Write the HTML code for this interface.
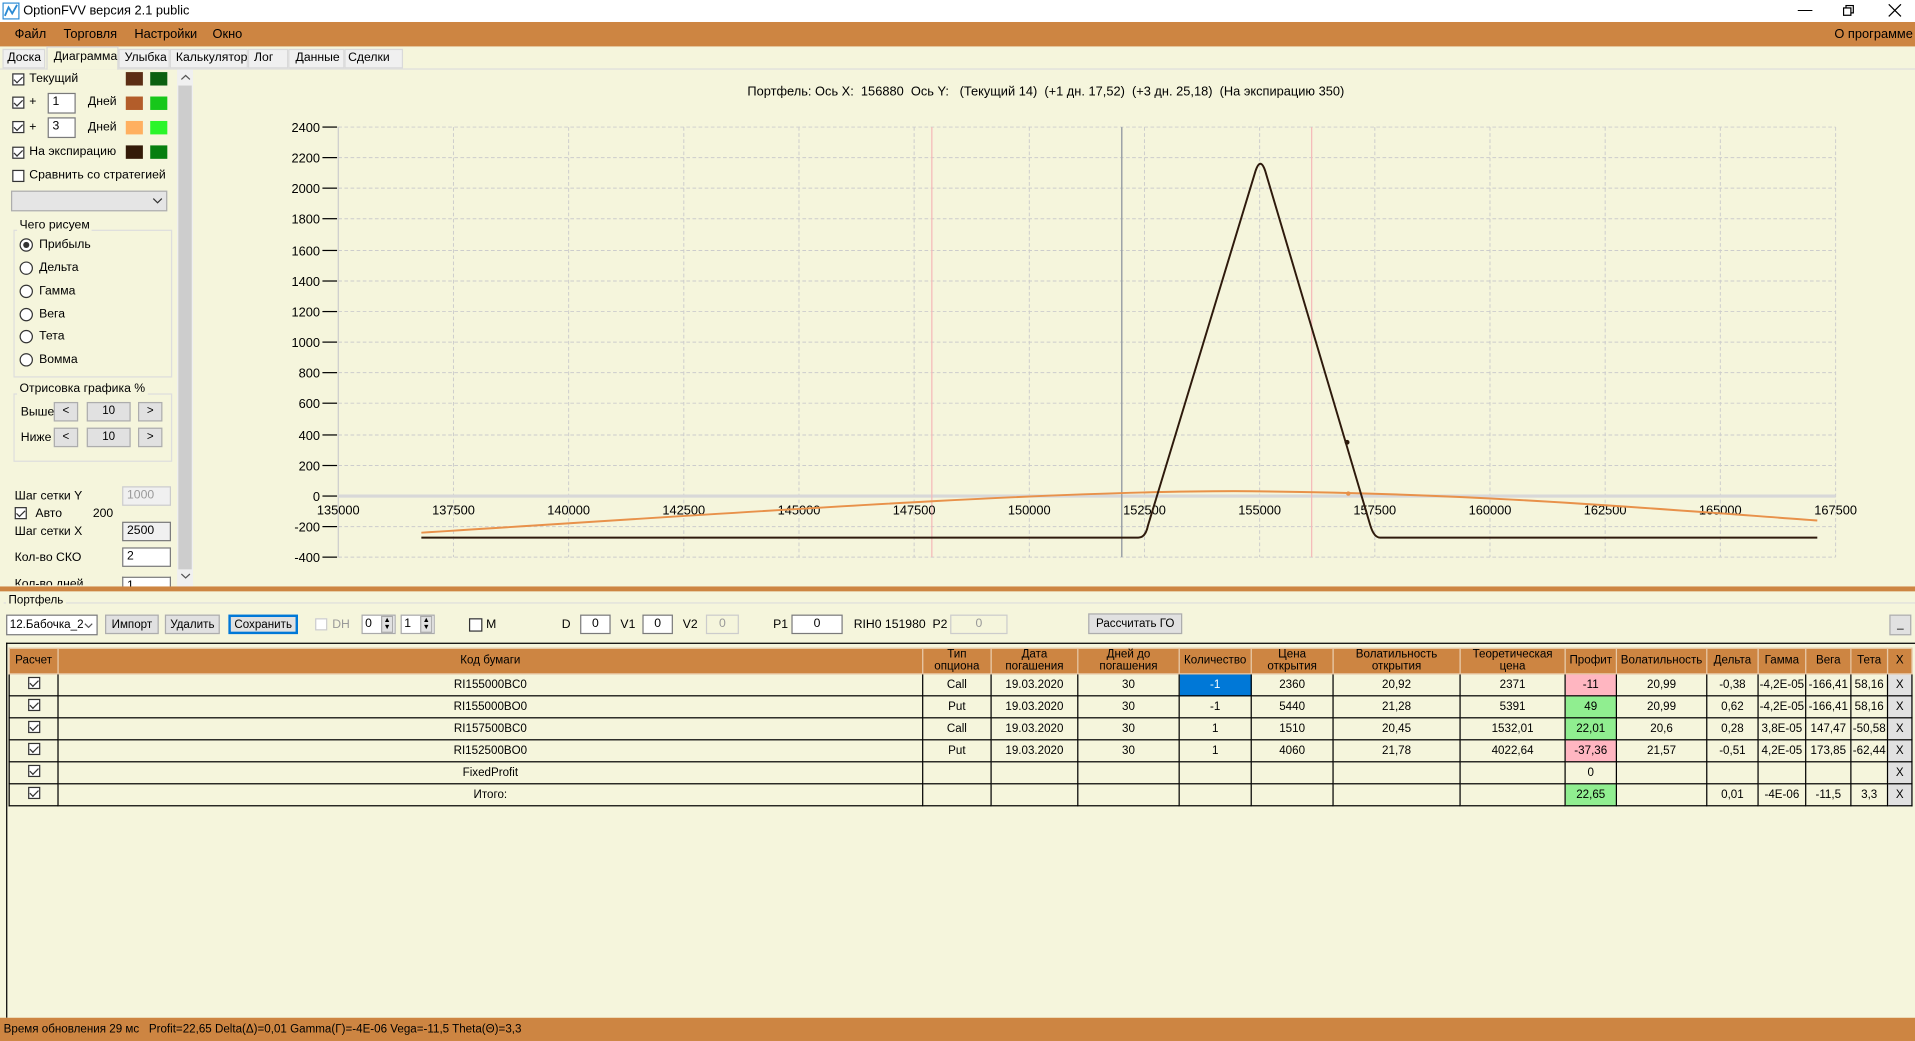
<!DOCTYPE html>
<html><head><meta charset="utf-8">
<style>
*{box-sizing:border-box;margin:0;padding:0}
html,body{width:1915px;height:1041px;overflow:hidden;background:#F5F5DC}
body{font-family:"Liberation Sans",sans-serif;color:#000}
#w{position:absolute;left:0;top:0;width:1568px;height:852px;transform:scale(1.22130,1.2218);transform-origin:0 0;background:#F5F5DC;font-size:10px}
.a{position:absolute;white-space:nowrap}
.cb{position:absolute;width:10px;height:10px;border:1px solid #333;background:#fff}
.cb.k::after{content:"";position:absolute;left:2px;top:0px;width:3px;height:6px;border:solid #333;border-width:0 1px 1px 0;transform:rotate(45deg)}
.rb{position:absolute;width:11px;height:11px;border:1px solid #333;border-radius:50%;background:#fff}
.sw{position:absolute;width:14px;height:11px}
.inp{position:absolute;background:#fff;border:1px solid #7a7a7a;height:16px;font-size:10px;padding:1px 3px}
.btn{position:absolute;background:#e1e1e1;border:1px solid #adadad;height:16px;font-size:9.5px;text-align:center;line-height:14px}
table{border-collapse:collapse;position:absolute;left:7px;top:530px;font-size:9.5px}
td,th{border:1px solid #000;text-align:center;padding:0;height:18px;font-weight:normal}
th{background:#CD8542;line-height:10px;height:21px;border-color:#e8c9a8}
.pk{background:#FFB6C1}.gr{background:#90EE90}.bl{background:#0078D7;color:#fff}
.x{background:#e1e1e1}
</style></head><body><div id="w">
<!-- title bar -->
<div class="a" style="left:0;top:0;width:1568px;height:18px;background:#fff"></div>
<svg class="a" style="left:2px;top:2px" width="14" height="14"><rect x="0.5" y="0.5" width="13" height="13" fill="none" stroke="#2a8ad4"/><path d="M2,11 L5,4 L8,9 L12,2" stroke="#2a8ad4" fill="none" stroke-width="1.5"/></svg>
<div class="a" style="left:19px;top:3px;font-size:10.5px">OptionFVV версия 2.1 public</div>
<div class="a" style="left:1472px;top:1px;font-size:12px">&#8212;</div>
<svg class="a" style="left:1509px;top:4px" width="10" height="10"><rect x="0.5" y="2.5" width="6" height="6" fill="none" stroke="#000"/><path d="M2.5,2.5V0.5H8.5V6.5H6.5" fill="none" stroke="#000"/></svg>
<svg class="a" style="left:1546px;top:3px" width="11" height="11"><path d="M0.5,0.5L10.5,10.5M10.5,0.5L0.5,10.5" stroke="#000"/></svg>
<!-- menu -->
<div class="a" style="left:0;top:18px;width:1568px;height:20px;background:#CD8542"></div>
<div class="a" style="left:12px;top:22px;font-size:10.5px">Файл</div>
<div class="a" style="left:52px;top:22px;font-size:10.5px">Торговля</div>
<div class="a" style="left:110px;top:22px;font-size:10.5px">Настройки</div>
<div class="a" style="left:174px;top:22px;font-size:10.5px">Окно</div>
<div class="a" style="left:1502px;top:22px;font-size:10.5px">О программе</div>
<!-- tabs -->
<div class="a" style="left:0;top:67px;width:1568px;height:1px;background:#ddd;top:56px"></div>
<div class="a" style="left:2px;top:40px;width:35px;height:16px;background:#f0f0f0;border:1px solid #d9d9d9"></div>
<div class="a" style="left:6px;top:42px">Доска</div>
<div class="a" style="left:38px;top:38px;width:59px;height:19px;background:#F5F5DC;border:1px solid #d9d9d9;border-bottom:none"></div>
<div class="a" style="left:44px;top:41px">Диаграмма</div>
<div class="a" style="left:97px;top:40px;width:300px;height:16px"></div>
<div class="a" style="left:97px;top:40px;width:42px;height:16px;background:#f0f0f0;border:1px solid #d9d9d9"></div><div class="a" style="left:102px;top:42px">Улыбка</div>
<div class="a" style="left:139px;top:40px;width:64px;height:16px;background:#f0f0f0;border:1px solid #d9d9d9"></div><div class="a" style="left:144px;top:42px">Калькулятор</div>
<div class="a" style="left:203px;top:40px;width:33px;height:16px;background:#f0f0f0;border:1px solid #d9d9d9"></div><div class="a" style="left:208px;top:42px">Лог</div>
<div class="a" style="left:236px;top:40px;width:46px;height:16px;background:#f0f0f0;border:1px solid #d9d9d9"></div><div class="a" style="left:242px;top:42px">Данные</div>
<div class="a" style="left:282px;top:40px;width:48px;height:16px;background:#f0f0f0;border:1px solid #d9d9d9"></div><div class="a" style="left:285px;top:42px">Сделки</div>
<!-- left panel -->
<div class="cb k" style="left:10px;top:60px"></div><div class="a" style="left:24px;top:59px">Текущий</div>
<div class="sw" style="left:103px;top:59px;background:#5C2E14"></div><div class="sw" style="left:123px;top:59px;background:#0B6010"></div>
<div class="cb k" style="left:10px;top:79px"></div><div class="a" style="left:24px;top:78px">+</div>
<div class="inp" style="left:39px;top:76px;width:23px;height:17px">1</div><div class="a" style="left:72px;top:78px">Дней</div>
<div class="sw" style="left:103px;top:79px;background:#B35D2A"></div><div class="sw" style="left:123px;top:79px;background:#17C71A"></div>
<div class="cb k" style="left:10px;top:99px"></div><div class="a" style="left:24px;top:99px">+</div>
<div class="inp" style="left:39px;top:96px;width:23px;height:17px">3</div><div class="a" style="left:72px;top:99px">Дней</div>
<div class="sw" style="left:103px;top:99px;background:#FFB060"></div><div class="sw" style="left:123px;top:99px;background:#2AF52A"></div>
<div class="cb k" style="left:10px;top:120px"></div><div class="a" style="left:24px;top:119px">На экспирацию</div>
<div class="sw" style="left:103px;top:119px;background:#331A08"></div><div class="sw" style="left:123px;top:119px;background:#067F0F"></div>
<div class="cb" style="left:10px;top:139px"></div><div class="a" style="left:24px;top:138px">Сравнить со стратегией</div>
<div class="a" style="left:9px;top:156px;width:128px;height:17px;background:#e5e5e5;border:1px solid #adadad"></div>
<svg class="a" style="left:125px;top:162px" width="8" height="5"><path d="M0.5,0.5L4,4L7.5,0.5" stroke="#333" fill="none"/></svg>
<div class="a" style="left:11px;top:188px;width:130px;height:121px;border:1px solid #ddd"></div>
<div class="a" style="left:14px;top:179px;background:#F5F5DC;padding:0 2px">Чего рисуем</div>
<div class="rb" style="left:16px;top:195px"><div style="position:absolute;left:2px;top:2px;width:5px;height:5px;border-radius:50%;background:#333"></div></div><div class="a" style="left:32px;top:195px">Прибыль</div>
<div class="rb" style="left:16px;top:214px"></div><div class="a" style="left:32px;top:214px">Дельта</div>
<div class="rb" style="left:16px;top:233px"></div><div class="a" style="left:32px;top:233px">Гамма</div>
<div class="rb" style="left:16px;top:252px"></div><div class="a" style="left:32px;top:252px">Вега</div>
<div class="rb" style="left:16px;top:270px"></div><div class="a" style="left:32px;top:270px">Тета</div>
<div class="rb" style="left:16px;top:289px"></div><div class="a" style="left:32px;top:289px">Вомма</div>
<div class="a" style="left:11px;top:322px;width:130px;height:56px;border:1px solid #ddd"></div>
<div class="a" style="left:14px;top:313px;background:#F5F5DC;padding:0 2px">Отрисовка графика %</div>
<div class="a" style="left:17px;top:332px">Выше</div>
<div class="btn" style="left:44px;top:329px;width:20px">&lt;</div><div class="btn" style="left:71px;top:329px;width:36px">10</div><div class="btn" style="left:113px;top:329px;width:20px">&gt;</div>
<div class="a" style="left:17px;top:353px">Ниже</div>
<div class="btn" style="left:44px;top:350px;width:20px">&lt;</div><div class="btn" style="left:71px;top:350px;width:36px">10</div><div class="btn" style="left:113px;top:350px;width:20px">&gt;</div>
<div class="a" style="left:12px;top:401px">Шаг сетки Y</div>
<div class="inp" style="left:100px;top:398px;width:40px;color:#999;background:#f0f0f0;border-color:#ccc">1000</div>
<div class="cb k" style="left:12px;top:415px"></div><div class="a" style="left:29px;top:415px">Авто</div><div class="a" style="left:76px;top:415px">200</div>
<div class="a" style="left:12px;top:430px">Шаг сетки X</div>
<div class="inp" style="left:100px;top:427px;width:40px;background:#f0f0f0">2500</div>
<div class="a" style="left:12px;top:451px">Кол-во СКО</div>
<div class="inp" style="left:100px;top:448px;width:40px">2</div>
<div class="a" style="left:12px;top:473px;height:6px;overflow:hidden">Кол-во дней</div>
<div class="inp" style="left:100px;top:472px;width:40px;height:8px;overflow:hidden;border-bottom:none">1</div>
<!-- scrollbar -->
<div class="a" style="left:145px;top:57px;width:13px;height:423px;background:#f0f0f0"></div>
<div class="a" style="left:146px;top:70px;width:11px;height:396px;background:#cdcdcd"></div>
<svg class="a" style="left:148px;top:61px" width="8" height="5"><path d="M0.5,4L4,0.8L7.5,4" stroke="#555" fill="none"/></svg>
<svg class="a" style="left:148px;top:469px" width="8" height="5"><path d="M0.5,0.8L4,4L7.5,0.8" stroke="#555" fill="none"/></svg>
<!-- chart -->
<div class="a" style="left:612px;top:69px;font-size:10.5px">Портфель: Ось X:&nbsp; 156880&nbsp; Ось Y:&nbsp;&nbsp; (Текущий 14)&nbsp; (+1 дн. 17,52)&nbsp; (+3 дн. 25,18)&nbsp; (На экспирацию 350)</div>
<svg class="a" style="left:0;top:0" width="1568" height="480" font-family="Liberation Sans,sans-serif" font-size="11">
<g stroke="#ccc" stroke-dasharray="3,2" stroke-width="0.8">
<line x1="277" y1="104" x2="1503" y2="104"/><line x1="277" y1="129" x2="1503" y2="129"/><line x1="277" y1="154" x2="1503" y2="154"/><line x1="277" y1="179" x2="1503" y2="179"/><line x1="277" y1="205" x2="1503" y2="205"/><line x1="277" y1="230" x2="1503" y2="230"/><line x1="277" y1="255" x2="1503" y2="255"/><line x1="277" y1="280" x2="1503" y2="280"/><line x1="277" y1="305" x2="1503" y2="305"/><line x1="277" y1="330" x2="1503" y2="330"/><line x1="277" y1="356" x2="1503" y2="356"/><line x1="277" y1="381" x2="1503" y2="381"/><line x1="277" y1="431" x2="1503" y2="431"/><line x1="277" y1="456" x2="1503" y2="456"/>
<line x1="371.3" y1="104" x2="371.3" y2="456"/><line x1="465.6" y1="104" x2="465.6" y2="456"/><line x1="559.9" y1="104" x2="559.9" y2="456"/><line x1="654.2" y1="104" x2="654.2" y2="456"/><line x1="748.5" y1="104" x2="748.5" y2="456"/><line x1="842.8" y1="104" x2="842.8" y2="456"/><line x1="937.1" y1="104" x2="937.1" y2="456"/><line x1="1031.4" y1="104" x2="1031.4" y2="456"/><line x1="1125.7" y1="104" x2="1125.7" y2="456"/><line x1="1220" y1="104" x2="1220" y2="456"/><line x1="1314.3" y1="104" x2="1314.3" y2="456"/><line x1="1408.6" y1="104" x2="1408.6" y2="456"/><line x1="1503" y1="104" x2="1503" y2="456"/>
</g>
<line x1="277" y1="104" x2="277" y2="456" stroke="#ccc"/>
<line x1="277" y1="406" x2="1503" y2="406" stroke="#d8d8d8" stroke-width="2.5"/>
<line x1="763" y1="104" x2="763" y2="456" stroke="#f5b8b8"/>
<line x1="1074" y1="104" x2="1074" y2="456" stroke="#f5b8b8"/>
<line x1="918.5" y1="104" x2="918.5" y2="456" stroke="#9aa0a6" stroke-width="1.2"/>
<g stroke="#000" stroke-width="1">
<line x1="264" y1="104" x2="276" y2="104"/><line x1="264" y1="129" x2="276" y2="129"/><line x1="264" y1="154" x2="276" y2="154"/><line x1="264" y1="179" x2="276" y2="179"/><line x1="264" y1="205" x2="276" y2="205"/><line x1="264" y1="230" x2="276" y2="230"/><line x1="264" y1="255" x2="276" y2="255"/><line x1="264" y1="280" x2="276" y2="280"/><line x1="264" y1="305" x2="276" y2="305"/><line x1="264" y1="330" x2="276" y2="330"/><line x1="264" y1="356" x2="276" y2="356"/><line x1="264" y1="381" x2="276" y2="381"/><line x1="264" y1="406" x2="276" y2="406"/><line x1="264" y1="431" x2="276" y2="431"/><line x1="264" y1="456" x2="276" y2="456"/>
</g>
<g text-anchor="end" font-size="10.5">
<text x="262" y="108">2400</text><text x="262" y="133">2200</text><text x="262" y="158">2000</text><text x="262" y="183">1800</text><text x="262" y="209">1600</text><text x="262" y="234">1400</text><text x="262" y="259">1200</text><text x="262" y="284">1000</text><text x="262" y="309">800</text><text x="262" y="334">600</text><text x="262" y="360">400</text><text x="262" y="385">200</text><text x="262" y="410">0</text><text x="262" y="435">-200</text><text x="262" y="460">-400</text>
</g>
<g text-anchor="middle" font-size="10.5" fill="#000">
<text x="277" y="421">135000</text><text x="371.3" y="421">137500</text><text x="465.6" y="421">140000</text><text x="559.9" y="421">142500</text><text x="654.2" y="421">145000</text><text x="748.5" y="421">147500</text><text x="842.8" y="421">150000</text><text x="937.1" y="421">152500</text><text x="1031.4" y="421">155000</text><text x="1125.7" y="421">157500</text><text x="1220" y="421">160000</text><text x="1314.3" y="421">162500</text><text x="1408.6" y="421">165000</text><text x="1503" y="421">167500</text>
</g>
<path d="M345,436 C600,420 850,402 1010,402 C1200,403 1350,416 1488,426" fill="none" stroke="#E8914A" stroke-width="1.6"/>
<path d="M345,440 L932,440 Q938,440 940,430 L1028,140 Q1032,128 1036,140 L1122,430 Q1125,440 1130,440 L1488,440" fill="none" stroke="#2E1A0C" stroke-width="1.6"/>
<circle cx="1103" cy="362" r="2" fill="#2E1A0C"/>
<circle cx="1104" cy="404" r="1.8" fill="#E8914A"/>
</svg>
<!-- separator -->
<div class="a" style="left:0;top:480px;width:1568px;height:4px;background:#CD8542"></div>
<!-- portfolio -->
<div class="a" style="left:3px;top:493px;width:1565px;height:1px;background:#ddd"></div>
<div class="a" style="left:5px;top:486px;background:#F5F5DC;padding:0 2px;font-size:9.5px">Портфель</div>
<div class="a" style="left:5px;top:503px;width:75px;height:17px;background:#fff;border:1px solid #7a7a7a;font-size:9.5px;padding:2px">12.Бабочка_2</div>
<svg class="a" style="left:69px;top:510px" width="7" height="4"><path d="M0.5,0.5L3.5,3.5L6.5,0.5" stroke="#555" fill="none"/></svg>
<div class="btn" style="left:86px;top:503px;width:44px;height:16px;line-height:15px">Импорт</div>
<div class="btn" style="left:135px;top:503px;width:45px;height:16px;line-height:15px">Удалить</div>
<div class="btn" style="left:187px;top:503px;width:57px;height:16px;line-height:14px;border:2px solid #0078D7">Сохранить</div>
<div class="a" style="left:258px;top:506px;width:10px;height:10px;border:1px solid #ccc;background:#fff"></div><div class="a" style="left:272px;top:506px;color:#999">DH</div>
<div class="a" style="left:296px;top:503px;width:28px;height:16px;border:1px solid #aaa;background:#fff;padding:1px 2px">0</div><div class="a" style="left:312px;top:504px;width:10px;height:14px;background:#e1e1e1;border:1px solid #aaa;font-size:6px;line-height:6px;text-align:center">▲<br>▼</div>
<div class="a" style="left:328px;top:503px;width:28px;height:16px;border:1px solid #aaa;background:#fff;padding:1px 2px">1</div><div class="a" style="left:344px;top:504px;width:10px;height:14px;background:#e1e1e1;border:1px solid #aaa;font-size:6px;line-height:6px;text-align:center">▲<br>▼</div>
<div class="cb" style="left:384px;top:506px;width:11px;height:11px"></div><div class="a" style="left:398px;top:506px">M</div>
<div class="a" style="left:460px;top:506px">D</div><div class="inp" style="left:475px;top:503px;width:25px;text-align:center">0</div>
<div class="a" style="left:508px;top:506px">V1</div><div class="inp" style="left:526px;top:503px;width:25px;text-align:center">0</div>
<div class="a" style="left:559px;top:506px">V2</div><div class="inp" style="left:578px;top:503px;width:27px;text-align:center;color:#999;border-color:#ccc;background:#F5F5DC">0</div>
<div class="a" style="left:633px;top:506px">P1</div><div class="inp" style="left:648px;top:503px;width:42px;text-align:center">0</div>
<div class="a" style="left:699px;top:506px">RIH0 151980&nbsp; P2</div><div class="inp" style="left:778px;top:503px;width:47px;text-align:center;color:#999;border-color:#ccc;background:#F5F5DC">0</div>
<div class="btn" style="left:891px;top:502px;width:77px;height:17px;line-height:15px">Рассчитать ГО</div>
<div class="btn" style="left:1547px;top:503px;width:18px;height:17px">_</div>
<div class="a" style="left:5px;top:526px;width:1563px;height:307px;border-left:1px solid #000;border-top:1px solid #000"></div>
<table>
<tr><th style="width:40px">Расчет</th><th style="width:708px">Код бумаги</th><th style="width:56px">Тип<br>опциона</th><th style="width:71px">Дата<br>погашения</th><th style="width:83px">Дней до<br>погашения</th><th style="width:59px">Количество</th><th style="width:67px">Цена<br>открытия</th><th style="width:104px">Волатильность<br>открытия</th><th style="width:86px">Теоретическая<br>цена</th><th style="width:42px">Профит</th><th style="width:74px">Волатильность</th><th style="width:42px">Дельта</th><th style="width:39px">Гамма</th><th style="width:37px">Вега</th><th style="width:30px">Тета</th><th style="width:20px">X</th></tr>
<tr><td><span class="cb k" style="position:relative;display:inline-block"></span></td><td>RI155000BC0</td><td>Call</td><td>19.03.2020</td><td>30</td><td class="bl">-1</td><td>2360</td><td>20,92</td><td>2371</td><td class="pk">-11</td><td>20,99</td><td>-0,38</td><td>-4,2E-05</td><td>-166,41</td><td>58,16</td><td class="x">X</td></tr>
<tr><td><span class="cb k" style="position:relative;display:inline-block"></span></td><td>RI155000BO0</td><td>Put</td><td>19.03.2020</td><td>30</td><td>-1</td><td>5440</td><td>21,28</td><td>5391</td><td class="gr">49</td><td>20,99</td><td>0,62</td><td>-4,2E-05</td><td>-166,41</td><td>58,16</td><td class="x">X</td></tr>
<tr><td><span class="cb k" style="position:relative;display:inline-block"></span></td><td>RI157500BC0</td><td>Call</td><td>19.03.2020</td><td>30</td><td>1</td><td>1510</td><td>20,45</td><td>1532,01</td><td class="gr">22,01</td><td>20,6</td><td>0,28</td><td>3,8E-05</td><td>147,47</td><td>-50,58</td><td class="x">X</td></tr>
<tr><td><span class="cb k" style="position:relative;display:inline-block"></span></td><td>RI152500BO0</td><td>Put</td><td>19.03.2020</td><td>30</td><td>1</td><td>4060</td><td>21,78</td><td>4022,64</td><td class="pk">-37,36</td><td>21,57</td><td>-0,51</td><td>4,2E-05</td><td>173,85</td><td>-62,44</td><td class="x">X</td></tr>
<tr><td><span class="cb k" style="position:relative;display:inline-block"></span></td><td>FixedProfit</td><td></td><td></td><td></td><td></td><td></td><td></td><td></td><td>0</td><td></td><td></td><td></td><td></td><td></td><td class="x">X</td></tr>
<tr><td><span class="cb k" style="position:relative;display:inline-block"></span></td><td>Итого:</td><td></td><td></td><td></td><td></td><td></td><td></td><td></td><td class="gr">22,65</td><td></td><td>0,01</td><td>-4E-06</td><td>-11,5</td><td>3,3</td><td class="x">X</td></tr>
</table>
<!-- status -->
<div class="a" style="left:0;top:833px;width:1568px;height:19px;background:#CD8542"></div>
<div class="a" style="left:3px;top:837px;font-size:9.5px">Время обновления 29 мс&nbsp;&nbsp; Profit=22,65 Delta(Δ)=0,01 Gamma(Γ)=-4E-06 Vega=-11,5 Theta(Θ)=3,3</div>
</div></body></html>
